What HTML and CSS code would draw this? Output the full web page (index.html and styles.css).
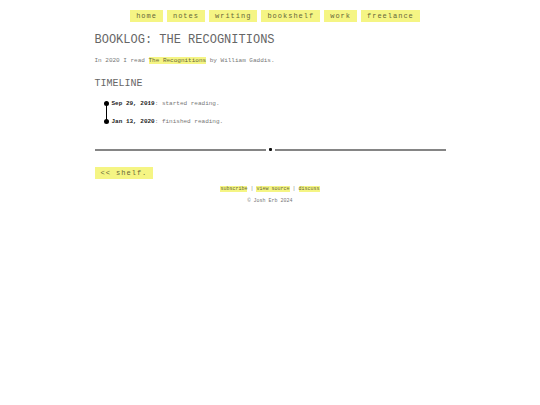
FILE: index.html
```html
<!DOCTYPE html>
<html lang="en">
<head>
<meta charset="utf-8">
<title>Booklog: The Recognitions</title>
<link rel="stylesheet" href="styles.css">
</head>
<body>
<div class="page">
<nav class="nav">
<a class="button" href="#">home</a>
<a class="button" href="#">notes</a>
<a class="button" href="#">writing</a>
<a class="button" href="#">bookshelf</a>
<a class="button" href="#">work</a>
<a class="button" href="#">freelance</a>
</nav>
<main>
<h1>Booklog: The Recognitions</h1>
<p class="intro">In 2020 I read <a class="mark" href="#">The Recognitions</a> by William Gaddis.</p>
<h2>Timeline</h2>
<ul class="timeline">
<li><strong>Sep 29, 2019</strong>: started reading.</li>
<li><strong>Jan 13, 2020</strong>: finished reading.</li>
</ul>
<div class="divider"><span class="dot"></span></div>
<a class="button back" href="#">&lt;&lt; shelf.</a>
</main>
<footer>
<p><a class="mark" href="#">subscribe</a> | <a class="mark" href="#">view source</a> | <a class="mark" href="#">discuss</a></p>
<p>© Josh Erb 2024</p>
</footer>
</div>
</body>
</html>
```
FILE: styles.css
```css
body {
  margin: 0;
  background: #fff;
  color: #777;
  font: 6px/12px "Liberation Mono", "Courier New", monospace;
}

.page {
  width: 65%;
  margin: 0 auto;
  padding-top: 10px;
}

.nav {
  display: flex;
  justify-content: center;
  gap: 4px;
  padding-left: 10px;
}

.button {
  padding: 0 6px;
  background: #f5f584;
  color: #66663a;
  font-size: 7px;
  line-height: 12px;
  letter-spacing: 1px;
  text-decoration: none;
  white-space: nowrap;
}

h1,
h2 {
  color: #666;
  font-weight: 400;
  text-transform: uppercase;
}

h1 {
  margin: 11px 0 8px;
  font-size: 12px;
  line-height: 14px;
}

h2 {
  margin: 11px 0 8px;
  font-size: 10px;
  line-height: 12px;
}

p {
  margin: 0;
}

.mark {
  background: #f5f584;
  color: #66663a;
  text-decoration: none;
}

.timeline {
  display: grid;
  gap: 6px;
  margin: 0;
  padding: 0 0 0 17px;
  list-style: none;
}

.timeline li {
  position: relative;
}

.timeline strong {
  color: #222;
}

.timeline li::before {
  content: "";
  position: absolute;
  top: 3px;
  left: -8px;
  width: 5px;
  height: 5px;
  border-radius: 50%;
  background: #000;
}

.timeline li:not(:last-child)::after {
  content: "";
  position: absolute;
  top: 6px;
  left: -6px;
  width: 1px;
  height: 18px;
  background: #000;
}

.divider {
  display: flex;
  align-items: center;
  gap: 3px;
  margin: 20px 0 16px;
}

.divider::before,
.divider::after {
  content: "";
  flex: 1;
  height: 2px;
  background: #858585;
}

.dot {
  width: 3px;
  height: 3px;
  border-radius: 1px;
  background: #111;
}

.back {
  display: inline-block;
}

footer {
  display: grid;
  margin-top: 3px;
  font-size: 5px;
  text-align: center;
}
```
